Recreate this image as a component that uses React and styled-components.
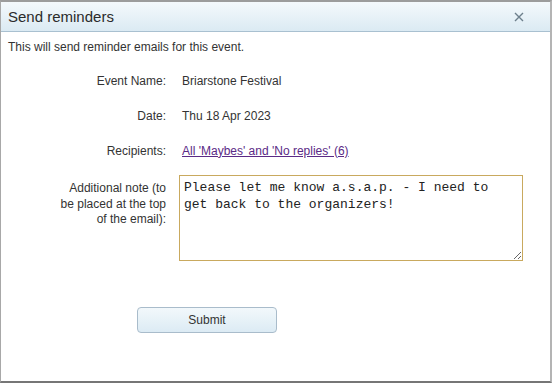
import React, { useState } from 'react';
import styled, { createGlobalStyle } from 'styled-components';

const GlobalStyle = createGlobalStyle`
  html, body {
    margin: 0;
    padding: 0;
    background: #ffffff;
  }
  * {
    box-sizing: border-box;
  }
`;

const Dialog = styled.div`
  width: 552px;
  height: 383px;
  display: flex;
  flex-direction: column;
  background: #ffffff;
  border-top: 2px solid #9c9c9c;
  border-left: 1px solid #a8a8a8;
  border-right: 2px solid #b4b4b4;
  border-bottom: 2px solid #767676;
  font-family: "Liberation Sans", Arial, sans-serif;
  color: #333333;
`;

const TitleBar = styled.div`
  height: 30px;
  display: flex;
  align-items: center;
  justify-content: space-between;
  padding: 0 25px 0 7px;
  background: linear-gradient(to bottom, #f4f9fc 0%, #dbeaf3 100%);
  border-bottom: 1px solid #a9c0d0;
`;

const Title = styled.h1`
  margin: 0;
  font-size: 15px;
  font-weight: normal;
  color: #2b2b2b;
`;

const CloseButton = styled.button`
  border: none;
  background: none;
  padding: 0;
  width: 12px;
  height: 12px;
  display: flex;
  cursor: pointer;
`;

const Intro = styled.p`
  margin: 0;
  padding: 8px 7px 0;
  height: 31px;
  font-size: 12px;
`;

const Form = styled.div`
  display: grid;
  grid-template-columns: 165px 1fr;
  column-gap: 13px;
  grid-auto-rows: 35px;
  padding-right: 28px;
`;

const Label = styled.div`
  font-size: 12px;
  text-align: right;
  align-self: center;
`;

const Value = styled.div`
  font-size: 12px;
  align-self: center;
  padding-left: 3px;
`;

const RecipientsLink = styled.a`
  color: #5b2a86;
  text-decoration: underline;
  cursor: pointer;
`;

const NoteRow = styled.div`
  display: grid;
  grid-template-columns: 165px 344px;
  column-gap: 13px;
  margin-top: 7px;
`;

const NoteLabel = styled.div`
  font-size: 12px;
  line-height: 15.5px;
  text-align: right;
  padding-top: 6px;
`;

const NoteInput = styled.textarea`
  width: 344px;
  height: 86px;
  border: 1px solid #c9a95e;
  padding: 3px 4px;
  font-family: "Liberation Mono", "Courier New", monospace;
  font-size: 13px;
  line-height: 17px;
  color: #222222;
  resize: both;
  outline: none;
`;

const Actions = styled.div`
  padding: 46px 0 0 136px;
`;

const SubmitButton = styled.button`
  width: 140px;
  height: 26px;
  border: 1px solid #a9bccb;
  border-radius: 4px;
  background: linear-gradient(to bottom, #f2f8fb 0%, #dcebf4 100%);
  font-family: "Liberation Sans", Arial, sans-serif;
  font-size: 12px;
  color: #333333;
  cursor: pointer;
`;

const CloseIcon = () => (
  <svg width="12" height="12" viewBox="0 0 12 12">
    <path d="M2 2 L10 10 M10 2 L2 10" stroke="#6d7f8c" strokeWidth="1.4" fill="none" />
  </svg>
);

const App = () => {
  const [note, setNote] = useState(
    'Please let me know a.s.a.p. - I need to get back to the organizers!'
  );

  return (
    <>
      <GlobalStyle />
      <Dialog>
        <TitleBar>
          <Title>Send reminders</Title>
          <CloseButton aria-label="Close">
            <CloseIcon />
          </CloseButton>
        </TitleBar>
        <Intro>This will send reminder emails for this event.</Intro>
        <Form>
          <Label>Event Name:</Label>
          <Value>Briarstone Festival</Value>
          <Label>Date:</Label>
          <Value>Thu 18 Apr 2023</Value>
          <Label>Recipients:</Label>
          <Value>
            <RecipientsLink>All 'Maybes' and 'No replies' (6)</RecipientsLink>
          </Value>
        </Form>
        <NoteRow>
          <NoteLabel>
            Additional note (to
            <br />
            be placed at the top
            <br />
            of the email):
          </NoteLabel>
          <NoteInput value={note} onChange={(e) => setNote(e.target.value)} />
        </NoteRow>
        <Actions>
          <SubmitButton>Submit</SubmitButton>
        </Actions>
      </Dialog>
    </>
  );
};

export default App;
